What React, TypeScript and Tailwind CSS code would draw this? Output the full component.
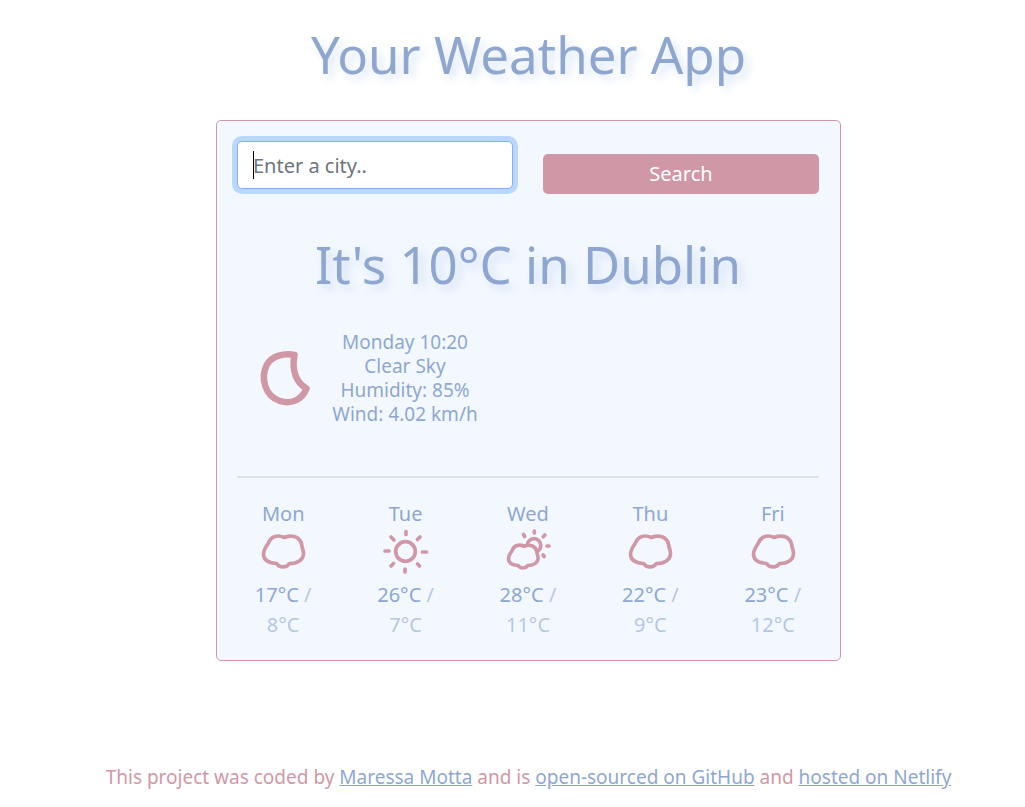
import type { ReactNode } from "react";

type Sky = "cloud" | "sun" | "partly";

const forecast: { day: string; sky: Sky; high: number; low: number }[] = [
  { day: "Mon", sky: "cloud", high: 17, low: 8 },
  { day: "Tue", sky: "sun", high: 26, low: 7 },
  { day: "Wed", sky: "partly", high: 28, low: 11 },
  { day: "Thu", sky: "cloud", high: 22, low: 9 },
  { day: "Fri", sky: "cloud", high: 23, low: 12 },
];

const conditions = ["Monday 10:20", "Clear Sky", "Humidity: 85%", "Wind: 4.02 km/h"];

const cloudPath =
  "M27.300 12.500C21 9.500 14 11 11.500 18C9 21.500 6.700 24.500 6.500 29C6.500 35 12 38 19.500 38.500C22.500 43 29.500 43 32.500 38.500C40 38.500 46.500 35 46.500 28.500C46.500 25 44.800 22.500 44.500 19C42.500 11.500 35 9.500 27.300 12.500Z";

function Drawing({ children, className, viewBox }: { children: ReactNode; className: string; viewBox: string }) {
  return (
    <svg
      aria-hidden="true"
      viewBox={viewBox}
      className={className}
      fill="none"
      stroke="#d098a6"
      strokeWidth="3.700"
      strokeLinecap="round"
      strokeLinejoin="round"
    >
      {children}
    </svg>
  );
}

function SkyIcon({ sky }: { sky: Sky }) {
  return (
    <Drawing viewBox="0 0 52 52" className="size-[52px]">
      {sky === "cloud" && <path d={cloudPath} />}
      {sky === "sun" && (
        <>
          <circle cx="25.500" cy="26.500" r="9.800" />
          <path d="M26 6.500V9.500M25 44V47M5 26H9M42.500 27H46.500M11 12L14 15M37.500 14.500L40 12M11 41L13.500 38.500M37.500 39L39.500 41" />
        </>
      )}
      {sky === "partly" && (
        <>
          <circle cx="32" cy="20.500" r="6.800" />
          <path d={cloudPath} transform="translate(1.700 12) scale(.74)" strokeWidth="4.900" fill="#f3f8ff" />
          <path d="M32.300 6V8M21.500 9.500L22.700 11.500M41.200 11.700L42.800 10M45 21H47M41 30L42.200 31.500" />
        </>
      )}
    </Drawing>
  );
}

export default function App() {
  return (
    <div className="min-h-screen bg-white pl-8 text-center font-['Comic_Sans_MS','Noto_Sans',sans-serif] text-[#8fa7d0]">
      <h1 className="pt-6 text-[51px] leading-[60px] [text-shadow:5px_5px_10px_#d9e3f6]">Your Weather App</h1>

      <main className="mx-auto mt-9 w-full max-w-[625px] rounded-[5px] border border-[#d098a6] bg-[#f3f8ff] py-5 pr-[21px] pl-5">
        <form className="grid grid-cols-2 gap-[30px]" onSubmit={(event) => event.preventDefault()}>
          <div className="relative">
            <input
              type="search"
              aria-label="City"
              placeholder="Enter a city.."
              className="block h-12 w-full rounded-[5px] border border-[#86b0f0] bg-white px-[15px] text-[20px] text-[#212529] outline-none ring-[5px] ring-[#b9d7ff] placeholder:text-[#6c757d]"
            />
            <span aria-hidden="true" className="absolute top-[10px] left-4 h-7 w-px bg-black" />
          </div>
          <button type="submit" className="mt-[13px] h-10 rounded-[5px] bg-[#d098a6] text-[20px] text-white">
            Search
          </button>
        </form>

        <h2 className="mt-10 text-[51px] leading-[60px] [text-shadow:5px_5px_10px_#d3dff3]">It's 10°C in Dublin</h2>

        <section className="mt-9 flex items-center pl-3">
          <Drawing viewBox="0 0 72 72" className="size-[72px] shrink-0">
            <path
              strokeWidth="6.500"
              d="M45.500 13C35 10.500 23 14 18 22.500C11 36 16 54 31 59C42 62.500 53 58 57.500 46.500C47 40.500 42.500 28 45.500 13Z"
            />
          </Drawing>
          <ul className="w-[168px] whitespace-nowrap text-[19px] leading-6">
            {conditions.map((condition) => (
              <li key={condition}>{condition}</li>
            ))}
          </ul>
        </section>

        <hr className="mt-[50px] border-t-2 border-[#d9e1ef]" />

        <section className="mt-[25px] grid grid-cols-5 gap-[30px] text-[20px]">
          {forecast.map(({ day, sky, high, low }) => (
            <article key={day} className="flex flex-col items-center">
              <h3 className="leading-[22px]">{day}</h3>
              <SkyIcon sky={sky} />
              <p className="mt-[3px] whitespace-nowrap leading-[30px]">
                {high}°C <span className="opacity-60">/</span>
                <span className="block opacity-60">{low}°C</span>
              </p>
            </article>
          ))}
        </section>
      </main>

      <footer className="mt-[101px] pb-3 font-['Segoe_UI','Noto_Sans',sans-serif] text-[19px] leading-[30px] text-[#d098a6]">
        This project was coded by{" "}
        <a href="#author" className="text-[#8fa7d0] underline">Maressa Motta</a> and is{" "}
        <a href="#source" className="text-[#8fa7d0] underline">open-sourced on GitHub</a> and{" "}
        <a href="#hosting" className="text-[#8fa7d0] underline">hosted on Netlify</a>
      </footer>
    </div>
  );
}
